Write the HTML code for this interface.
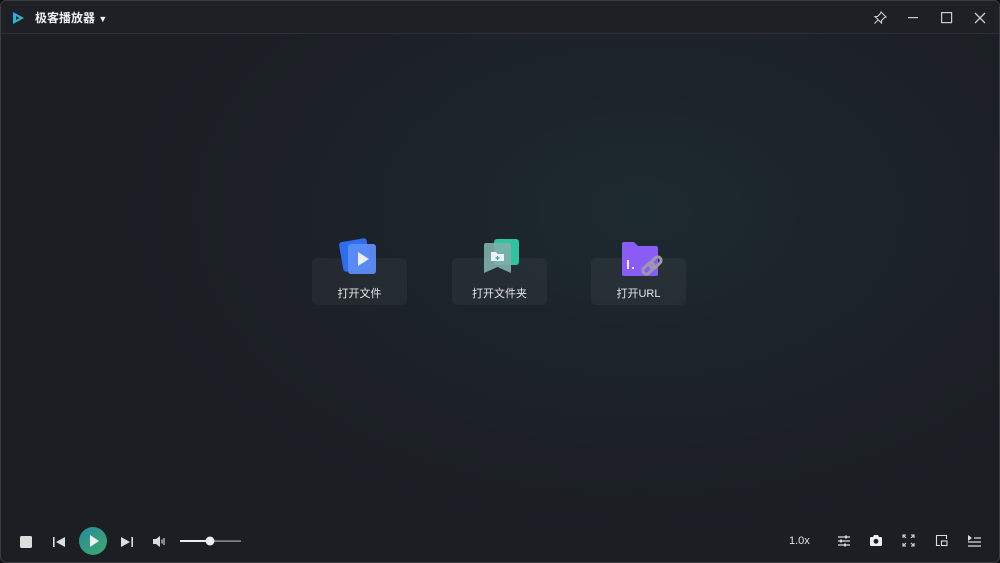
<!DOCTYPE html>
<html><head><meta charset="utf-8"><style>
*{margin:0;padding:0;box-sizing:border-box}
body{width:1000px;height:563px;overflow:hidden;background:#0e0f11;font-family:"Liberation Sans","Noto Sans CJK SC",sans-serif;color:#e8e8ea}
.win{position:absolute;left:0;top:0;width:1000px;height:563px;border:1px solid #3a3c42;border-radius:6px;overflow:hidden;background:radial-gradient(ellipse 520px 330px at 640px 210px,#1d2a30 0%,#1c232a 45%,#1b1e23 100%)}
.tb{position:absolute;left:0;top:0;right:0;height:33px;background:#1e2025;border-bottom:1px solid #2e3036}
.title{position:absolute;left:34px;top:8px;font-size:12px;font-weight:bold;color:#f0f0f0}
.card{position:absolute;top:257px;width:95px;height:47px;background:rgba(255,255,255,0.045);border-radius:5px}
.card span{position:absolute;left:0;right:0;top:27px;text-align:center;font-size:11px;color:#e6e6e6}
.ctrl{position:absolute;left:0;right:0;bottom:0;height:44px}
svg{position:absolute}
</style></head><body><div class="win">
<div class="tb">
<svg style="left:9px;top:9px" width="16" height="16" viewBox="0 0 16 16"><defs><linearGradient id="lg" x1="0" y1="0" x2="1" y2="1"><stop offset="0" stop-color="#2aa3ff"/><stop offset="1" stop-color="#1fd19a"/></linearGradient></defs><path d="M3 2 L14 8 L3 14 Z M6 6 L6 10 L9.5 8Z" fill="url(#lg)" fill-rule="evenodd"/></svg>
<div class="title">极客播放器 <span style="font-size:9px">▼</span></div>
<svg style="left:872px;top:10px" width="14" height="14" viewBox="0 0 14 14" fill="none" stroke="#ccc" stroke-width="1.1"><path d="M8 1 L13 6 L11 7 L8.5 9.5 L8.5 12 L2 5.5 L4.5 5.5 L7 3 Z M5 9 L1.5 12.5"/></svg>
<svg style="left:907px;top:16px" width="12" height="2"><rect width="10" height="1.2" fill="#ccc"/></svg>
<svg style="left:940px;top:11px" width="12" height="12"><rect x="0.6" y="0.6" width="10" height="10" fill="none" stroke="#ccc" stroke-width="1.2"/></svg>
<svg style="left:973px;top:11px" width="12" height="12" stroke="#ccc" stroke-width="1.3"><path d="M1 1L11 11M11 1L1 11"/></svg>
</div>

<div class="card" style="left:311px"><span>打开文件</span></div>
<div class="card" style="left:451px"><span>打开文件夹</span></div>
<div class="card" style="left:590px"><span>打开URL</span></div>

<svg style="left:337px;top:237px" width="42" height="38" viewBox="0 0 42 38"><rect x="3" y="2" width="28" height="30" rx="3" fill="#2f6cf0" transform="rotate(-10 17 17)"/><rect x="10" y="6" width="28" height="30" rx="3" fill="#5b8df5" opacity="0.95"/><path d="M20 14 L31 21 L20 28Z" fill="#e8eefc"/></svg>
<svg style="left:481px;top:236px" width="40" height="38" viewBox="0 0 40 38"><rect x="12" y="2" width="25" height="26" rx="3" fill="#2fc4a0"/><path d="M2 8 Q2 6 4 6 L27 6 Q29 6 29 8 L29 36 L15.5 30 L2 36Z" fill="#7fb0a8" opacity="0.9"/><path d="M9 15 L14 15 L15.5 17 L22 17 L22 24 L9 24Z" fill="#eef"/><path d="M15.5 19 v4 M13.5 21 h4" stroke="#2fa890" stroke-width="1.2"/></svg>
<svg style="left:619px;top:239px" width="46" height="40" viewBox="0 0 46 40"><path d="M2 4 Q2 2 4 2 L14 2 L18 6 L36 6 Q38 6 38 8 L38 34 Q38 36 36 36 L4 36 Q2 36 2 34Z" fill="#8a5cf5"/><rect x="7" y="20" width="2" height="9" fill="#eee"/><rect x="12" y="27" width="2" height="2" fill="#eee"/><g fill="none" stroke="#9a9aa8" stroke-width="3"><rect x="22" y="25" width="13" height="7" rx="3.5" transform="rotate(-45 28.5 28.5)"/><rect x="29" y="19" width="13" height="7" rx="3.5" transform="rotate(-45 35.5 22.5)"/></g></svg>

<div class="ctrl">
<svg style="left:20px;top:536px;position:fixed" width="12" height="12"><rect width="12" height="12" rx="1.5" fill="#ddd"/></svg>
<svg style="left:53px;top:536px;position:fixed" width="12" height="12"><rect x="0" y="1" width="1.6" height="10" fill="#ddd"/><path d="M12 1 L3 6 L12 11Z" fill="#ddd"/></svg>
<svg style="left:79px;top:527px;position:fixed" width="28" height="28" viewBox="0 0 28 28"><defs><linearGradient id="pg" x1="0" y1="0" x2="1" y2="1"><stop offset="0" stop-color="#2a8a9a"/><stop offset="1" stop-color="#3aab6a"/></linearGradient></defs><circle cx="14" cy="14" r="14" fill="url(#pg)"/><path d="M11 8 L20 14 L11 20Z" fill="#eee"/></svg>
<svg style="left:121px;top:536px;position:fixed" width="12" height="12"><path d="M0 1 L9 6 L0 11Z" fill="#ddd"/><rect x="10.4" y="1" width="1.6" height="10" fill="#ddd"/></svg>
<svg style="left:153px;top:535px;position:fixed" width="14" height="13"><path d="M0 4 L3 4 L7 1 L7 12 L3 9 L0 9Z" fill="#ddd"/><path d="M9 4.5 v4 M11 3 v7" stroke="#ddd" stroke-width="1.1"/></svg>
<svg style="left:180px;top:535px;position:fixed" width="62" height="12"><rect x="0" y="5.5" width="61" height="1.2" fill="#aaa"/><rect x="0" y="5" width="30" height="2" fill="#eee"/><circle cx="30" cy="6" r="4.5" fill="#eee"/></svg>
<div style="position:fixed;left:789px;top:535px;font-size:11px;color:#dfe4ea">1.0x</div>
<svg style="left:837px;top:534px;position:fixed" width="14" height="14" stroke="#ddd" stroke-width="1.2"><path d="M1 3h12M1 7h12M1 11h12"/><path d="M9 1.5v3M4 5.5v3M8 9.5v3" stroke-width="1.8"/></svg>
<svg style="left:869px;top:534px;position:fixed" width="14" height="13"><path d="M1 4 Q1 3 2 3 L4 3 L5 1 L9 1 L10 3 L12 3 Q13 3 13 4 L13 11 Q13 12 12 12 L2 12 Q1 12 1 11Z" fill="#eee"/><circle cx="7" cy="7.3" r="2.4" fill="#1c1e22"/></svg>
<svg style="left:902px;top:534px;position:fixed" width="13" height="13" stroke="#ddd" stroke-width="1.1" fill="none"><path d="M1 4V1h3M1 1l3 3M12 4V1H9M12 1L9 4M1 9v3h3M1 12l3-3M12 9v3H9M12 12L9 9"/></svg>
<svg style="left:935px;top:534px;position:fixed" width="13" height="13" stroke="#ddd" stroke-width="1.1" fill="none"><path d="M5 11.5H1.5v-10h10V5"/><rect x="6.5" y="7" width="5.5" height="4.5"/></svg>
<svg style="left:967px;top:534px;position:fixed" width="14" height="13"><path d="M1 1 L5 4 L1 7Z" fill="#ddd"/><path d="M7 4h7M1 8h13M1 12h13" stroke="#ddd" stroke-width="1.2"/></svg>
</div>
</div></body></html>
